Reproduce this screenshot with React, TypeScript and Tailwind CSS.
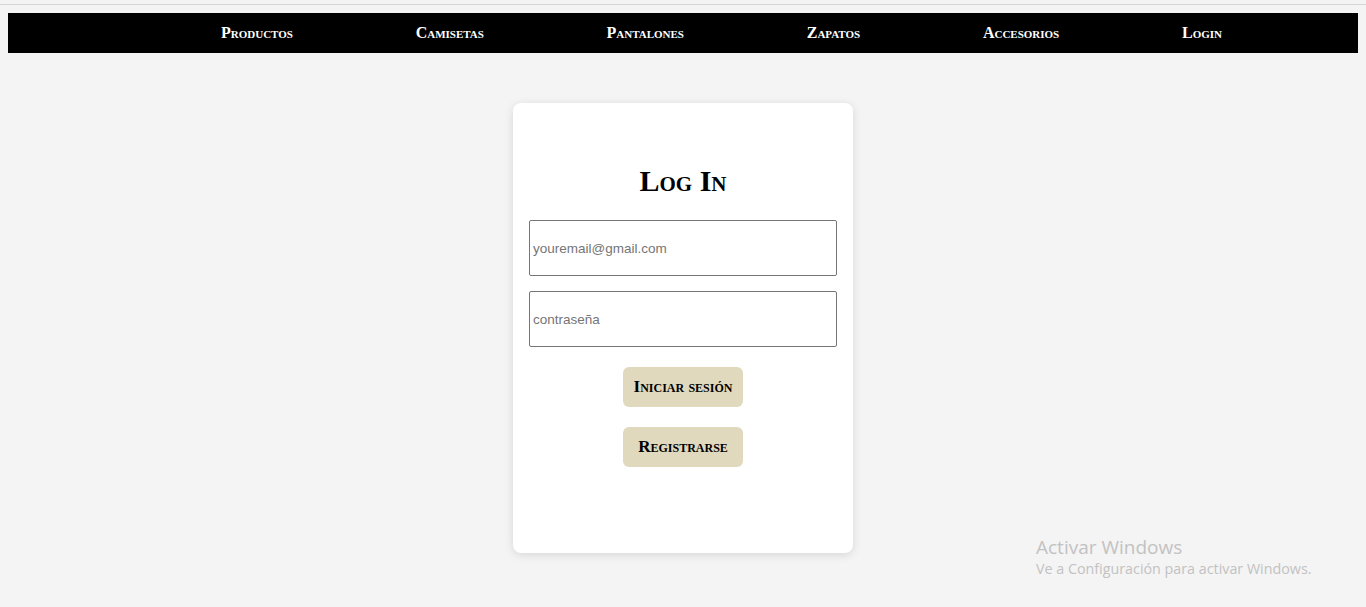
import React from "react";

const navItems = ["Productos", "Camisetas", "Pantalones", "Zapatos", "Accesorios", "Login"];

const serif = { fontFamily: '"Liberation Serif", "Times New Roman", serif' };

const App = () => {
  return (
    <div className="relative min-h-screen bg-[#f4f4f4] pt-[4px]" style={serif}>
      <div className="h-px bg-[#d4d4d4]" />
      <nav className="mx-2 mt-2 flex h-10 items-center justify-between bg-black pl-[213px] pr-[136px]">
        {navItems.map((item) => (
          <a
            key={item}
            href="#"
            className="text-[16px] font-bold text-white [font-variant:small-caps]"
          >
            {item}
          </a>
        ))}
      </nav>

      <div className="mx-auto mt-[50px] flex h-[450px] w-[340px] flex-col items-center rounded-lg bg-white px-4 pt-[60px] shadow-[0_2px_10px_rgba(0,0,0,0.12)]">
        <h2 className="text-[30px] font-bold leading-[36px] text-black [font-variant:small-caps]">
          Log In
        </h2>
        <input
          type="email"
          placeholder="youremail@gmail.com"
          className="mt-[21px] h-14 w-full rounded-[2px] border border-[#767676] px-[3px] text-[13.5px] outline-none placeholder:text-[#757575]"
          style={{ fontFamily: '"Liberation Sans", Arial, sans-serif' }}
        />
        <input
          type="password"
          placeholder="contraseña"
          className="mt-[15px] h-14 w-full rounded-[2px] border border-[#767676] px-[3px] text-[13.5px] outline-none placeholder:text-[#757575]"
          style={{ fontFamily: '"Liberation Sans", Arial, sans-serif' }}
        />
        <button className="mt-5 h-10 w-[120px] rounded-md bg-[#e1d9bd] text-[17px] font-bold text-black [font-variant:small-caps]">
          Iniciar sesión
        </button>
        <button className="mt-5 h-10 w-[120px] rounded-md bg-[#e1d9bd] text-[17px] font-bold text-black [font-variant:small-caps]">
          Registrarse
        </button>
      </div>

      <div
        className="absolute left-[1036px] top-[534px] text-[#c2c2c2]"
        style={{ fontFamily: '"Open Sans", "Noto Sans", sans-serif' }}
      >
        <div className="text-[19px] leading-[26px]">Activar Windows</div>
        <div className="text-[14.3px] leading-[18px]">Ve a Configuración para activar Windows.</div>
      </div>
    </div>
  );
};

export default App;
